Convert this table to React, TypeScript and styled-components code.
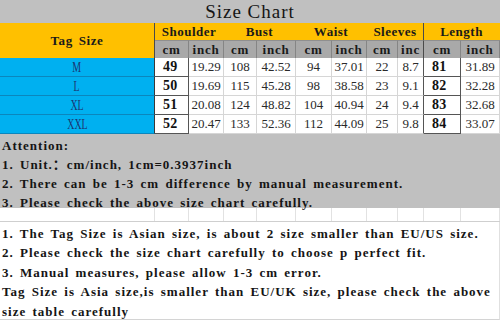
import React from "react";
import styled, { createGlobalStyle } from "styled-components";

const COLS = "155px 34px 35px 33px 39px 36px 35px 31px 26px 37px 39px";
const SERIF = `"Liberation Serif", "Noto Sans CJK SC", serif`;

const Global = createGlobalStyle`
  html, body { margin: 0; padding: 0; background: #fff; }
  body { width: 500px; height: 320px; overflow: hidden; font-family: ${SERIF}; }
  * { box-sizing: border-box; }
`;

const Page = styled.div`
  width: 500px;
  height: 320px;
  display: flex;
  flex-direction: column;
  background: #fff;
  overflow: hidden;
  color: #111;
`;

const Title = styled.div`
  height: 23px;
  flex: none;
  background: #c0c0c0;
  display: flex;
  align-items: center;
  justify-content: center;
  font-size: 19px;
  letter-spacing: 1px;
  color: #151515;
  padding-top: 1px;
`;

const Table = styled.div`
  display: grid;
  grid-template-columns: ${COLS};
  grid-template-rows: 17px 18px repeat(4, 19px);
  flex: none;
`;

const CellBase = styled.div`
  display: flex;
  align-items: center;
  justify-content: center;
  white-space: nowrap;
  overflow: hidden;
`;

const TagHead = styled(CellBase)`
  grid-row: span 2;
  background: #ffc000;
  border-right: 1px solid #4a4a4a;
  font-size: 13px;
  font-weight: bold;
  letter-spacing: 0.6px;
  word-spacing: 2px;
  color: #1a1a1a;
`;

const GroupHead = styled(CellBase)<{ $line?: boolean }>`
  grid-column: span 2;
  background: #ffc000;
  font-size: 13px;
  font-weight: bold;
  letter-spacing: 0.5px;
  color: #1a1a1a;
  border-right: 1px solid ${(p) => (p.$line ? "#4a4a4a" : "#ffc000")};
`;

const UnitCell = styled(CellBase)<{ $line?: boolean }>`
  background: #a9a9a9;
  border-right: 1px solid ${(p) => (p.$line ? "#4a4a4a" : "#858585")};
  border-top: 1px solid #8f8f8f;
  font-size: 13px;
  font-weight: bold;
  letter-spacing: 0.8px;
  color: #1a1a1a;
`;

const SizeCell = styled(CellBase)`
  background: #00b0f0;
  border-bottom: 1px solid #0b86bd;
  border-right: 1px solid #3a3a3a;
`;

const SizeLabel = styled.span`
  display: inline-block;
  font-size: 15px;
  color: #1c3470;
  transform: scaleX(0.66);
`;

const DataCell = styled(CellBase)<{ $strong?: boolean; $line?: boolean }>`
  background: #fff;
  border-bottom: 1px solid ${(p) => (p.$strong ? "#555" : "#d6d6d6")};
  border-right: 1px solid ${(p) => (p.$line ? "#555" : "#d6d6d6")};
  font-size: ${(p) => (p.$strong ? "14px" : "13px")};
  font-weight: ${(p) => (p.$strong ? "bold" : "normal")};
  letter-spacing: ${(p) => (p.$strong ? "0.3px" : "0")};
  color: ${(p) => (p.$strong ? "#111" : "#2a2a2a")};
  justify-content: ${(p) => (p.$strong ? "flex-start" : "center")};
  padding-left: ${(p) => (p.$strong ? "8px" : "0")};
`;

const Notice = styled.div<{ $gray?: boolean; $h: number }>`
  flex: none;
  height: ${(p) => p.$h}px;
  background: ${(p) => (p.$gray ? "#c0c0c0" : "#fff")};
  padding: 1.5px 0 0 2px;
  display: flex;
  flex-direction: column;
`;

const Line = styled.div<{ $lh: number }>`
  height: ${(p) => p.$lh}px;
  line-height: ${(p) => p.$lh}px;
  font-size: 13px;
  font-weight: bold;
  letter-spacing: 1px;
  word-spacing: 2px;
  color: #151515;
  white-space: nowrap;
`;

const BlankRow = styled.div`
  display: grid;
  grid-template-columns: ${COLS};
  height: 14px;
  flex: none;
  border-bottom: 1px solid #cfcfcf;
`;

const BlankCell = styled.div`
  border-right: 1px solid #e2e2e2;
`;

const NotesBox = styled(Notice)`
  border-right: 1px solid #e0e0e0;
  border-bottom: 1px solid #d4d4d4;
`;

type Row = { size: string; vals: string[] };

const rows: Row[] = [
  { size: "M", vals: ["49", "19.29", "108", "42.52", "94", "37.01", "22", "8.7", "81", "31.89"] },
  { size: "L", vals: ["50", "19.69", "115", "45.28", "98", "38.58", "23", "9.1", "82", "32.28"] },
  { size: "XL", vals: ["51", "20.08", "124", "48.82", "104", "40.94", "24", "9.4", "83", "32.68"] },
  { size: "XXL", vals: ["52", "20.47", "133", "52.36", "112", "44.09", "25", "9.8", "84", "33.07"] },
];

const groups = ["Shoulder", "Bust", "Waist", "Sleeves", "Length"];
const units = ["cm", "inch", "cm", "inch", "cm", "inch", "cm", "inc", "cm", "inch"];

const attention = [
  "Attention:",
  "1. Unit.：cm/inch, 1cm=0.3937inch",
  "2. There can be 1-3 cm difference by manual measurement.",
  "3. Please check the above size chart carefully.",
];

const notes = [
  "1. The Tag Size is Asian size, is about 2 size smaller than EU/US size.",
  "2. Please check the size chart carefully to choose p perfect fit.",
  "3. Manual measures, please allow 1-3 cm error.",
  "Tag Size is Asia size,is smaller than EU/UK size, please check the above",
  "size table carefully",
];

export default function App() {
  return (
    <>
      <Global />
      <Page>
        <Title>Size Chart</Title>
        <Table>
          <TagHead>Tag Size</TagHead>
          {groups.map((g) => (
            <GroupHead key={g} $line={g === "Sleeves"}>
              {g}
            </GroupHead>
          ))}
          {units.map((u, i) => (
            <UnitCell key={i} $line={i === 7}>
              {u}
            </UnitCell>
          ))}
          {rows.map((r) => (
            <React.Fragment key={r.size}>
              <SizeCell>
                <SizeLabel>{r.size}</SizeLabel>
              </SizeCell>
              {r.vals.map((v, i) => (
                <DataCell key={i} $strong={i === 0 || i === 8} $line={i === 0 || i === 7 || i === 8}>
                  {v}
                </DataCell>
              ))}
            </React.Fragment>
          ))}
        </Table>
        <Notice $gray $h={74}>
          {attention.map((t) => (
            <Line key={t} $lh={19}>
              {t}
            </Line>
          ))}
        </Notice>
        <BlankRow>
          {Array.from({ length: 11 }).map((_, i) => (
            <BlankCell key={i} />
          ))}
        </BlankRow>
        <NotesBox $h={98}>
          {notes.map((t) => (
            <Line key={t} $lh={19.5}>
              {t}
            </Line>
          ))}
        </NotesBox>
      </Page>
    </>
  );
}
